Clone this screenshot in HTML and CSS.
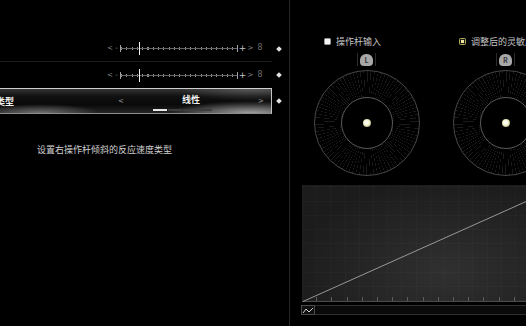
FILE: index.html
```html
<!DOCTYPE html>
<html lang="zh-CN">
<head>
  <meta charset="UTF-8" />
  <title>操作杆设置</title>
  <link rel="stylesheet" href="styles.css">
</head>
<body>
  <div class="screen">
    <div class="left">
      <div class="row sep">
        <div class="row-main slider">
          <span class="arr">&lt;</span><span class="minus">-</span>
          <div class="track"><span class="thumb"></span></div>
          <span class="plus">+</span><span class="arr">&gt;</span><span class="num">8</span>
        </div>
        <div class="mark"><span class="diamond"></span></div>
      </div>
      <div class="row">
        <div class="row-main slider">
          <span class="arr">&lt;</span><span class="minus">-</span>
          <div class="track"><span class="thumb"></span></div>
          <span class="plus">+</span><span class="arr">&gt;</span><span class="num">8</span>
        </div>
        <div class="mark"><span class="diamond"></span></div>
      </div>
      <div class="row">
        <div class="row-main selected">
          <div class="sel-label">类型</div>
          <span class="sel-arrow">&lt;</span>
          <div class="sel-value">
            <span>线性</span>
            <div class="pager"><i class="on"></i><i></i><i></i><i></i></div>
          </div>
          <span class="sel-arrow">&gt;</span>
        </div>
        <div class="mark"><span class="diamond"></span></div>
      </div>
      <p class="desc">设置右操作杆倾斜的反应速度类型</p>
    </div>

    <div class="right">
      <div class="modes">
        <label class="mode first"><span class="box box-white"></span>操作杆输入</label>
        <label class="mode"><span class="box box-olive"><span></span></span>调整后的灵敏度</label>
      </div>

      <div class="sticks">
        <div class="stick">
          <div class="stick-frame"><span class="stick-cap">L</span></div>
          <div class="dial"><div class="dial-inner"><span class="dial-dot"></span></div></div>
        </div>
        <div class="stick">
          <div class="stick-frame"><span class="stick-cap">R</span></div>
          <div class="dial"><div class="dial-inner"><span class="dial-dot"></span></div></div>
        </div>
      </div>

      <div class="graph">
        <div class="graph-body">
          <div class="axis"><i></i><i></i><i></i></div>
          <div class="plot">
            <svg width="261" height="117" viewBox="0 0 261 117">
              <line x1="1" y1="116.5" x2="261" y2="0" stroke="#c8c8c8" stroke-width="0.7" />
            </svg>
          </div>
        </div>
        <div class="graph-foot">
          <span class="foot-icon">
            <svg width="12" height="7" viewBox="0 0 12 7">
              <path d="M1 6 L4 2 L7 5 L11 1" fill="none" stroke="#d0d0d0" stroke-width="1" />
            </svg>
          </span>
          <span class="foot-bar"></span>
        </div>
      </div>
    </div>
  </div>
</body>
</html>
```

FILE: styles.css
```css
body {
  margin: 0;
  background: #000;
  color: #ddd;
  font-family: "Noto Sans CJK SC", "Noto Sans", sans-serif;
  overflow: hidden;
}
.screen {
  display: flex;
  width: 526px;
  height: 326px;
  overflow: hidden;
}

/* left column */
.left {
  width: 289px;
  flex-shrink: 0;
  border-right: 1px solid #262626;
  padding-top: 35px;
}
.row {
  display: flex;
  align-items: center;
}
.row-main {
  width: 272px;
  height: 26px;
  display: flex;
  align-items: center;
  box-sizing: border-box;
}
.row.sep .row-main {
  height: 27px;
  border-bottom: 1px solid #1c1c1c;
}
.mark {
  width: 14px;
  display: flex;
  justify-content: center;
}
.diamond {
  width: 4px;
  height: 4px;
  background: #e2e2e2;
  transform: rotate(45deg);
}

.slider {
  padding-left: 107px;
  font-family: "DejaVu Sans", sans-serif;
  font-size: 7px;
  color: #8a8a8a;
  line-height: 10px;
}
.slider .arr {
  width: 6px;
  text-align: center;
}
.slider .minus {
  width: 7px;
  text-align: center;
}
.slider .plus {
  width: 9px;
  text-align: center;
  font-size: 9px;
  color: #c4c4c4;
}
.slider .plus + .arr {
  width: 7px;
}
.slider .num {
  width: 12px;
  text-align: center;
  font-size: 8px;
  color: #6a6a6a;
}
.track {
  position: relative;
  width: 118px;
  height: 7px;
  box-sizing: border-box;
  border-left: 1px solid #a0a0a0;
  border-right: 1px solid #a0a0a0;
  background:
    linear-gradient(#666, #666) 0 50% / 100% 1px no-repeat,
    repeating-linear-gradient(90deg, #999 0 1px, transparent 1px 5.3px) 0 50% / 100% 3px no-repeat;
}
.thumb {
  position: absolute;
  left: 18px;
  top: -3px;
  width: 1px;
  height: 13px;
  background: #f0f0f0;
}

.selected {
  height: 26px;
  border: 1px solid #8c8c8c;
  border-left: 0;
  border-top-color: #cfcfcf;
  border-right-color: #c4c4c4;
  background:
    radial-gradient(60px 9px at 40px 100%, rgba(190, 190, 190, 0.5), transparent),
    radial-gradient(80px 12px at 250px 100%, rgba(225, 225, 225, 0.65), transparent),
    radial-gradient(70px 12px at 250px 0, rgba(160, 160, 160, 0.35), transparent),
    linear-gradient(#343434, #111 30%, #090909 65%, #242424);
  padding-right: 6px;
  color: #f2f2f2;
  font-size: 9px;
}
.sel-label {
  width: 117px;
  text-indent: -4px;
  white-space: nowrap;
  font-weight: bold;
}
.sel-arrow {
  width: 8px;
  text-align: center;
  color: #a0a0a0;
  font-family: "DejaVu Sans", sans-serif;
  font-size: 7px;
  line-height: 12px;
}
.sel-value {
  flex: 1;
  display: flex;
  flex-direction: column;
  align-items: center;
  padding-top: 2px;
  line-height: 12px;
  font-weight: bold;
}
.pager {
  align-self: flex-start;
  margin: 3px 0 0 28px;
  display: flex;
}
.pager i {
  width: 14px;
  height: 2px;
  background: #3c3c3c;
  margin-right: 1px;
}
.pager i.on {
  background: #e8e8e8;
}

.desc {
  margin: 30px 0 0 37px;
  font-size: 9px;
  line-height: 12px;
  color: #d0d0d0;
}

/* right column */
.right {
  flex: 1;
  min-width: 0;
  overflow: hidden;
  padding-top: 35px;
}
.modes {
  display: flex;
  height: 12px;
  align-items: center;
  padding-left: 34px;
  font-size: 9px;
  color: #c4c4c4;
  white-space: nowrap;
}
.mode {
  display: flex;
  align-items: center;
  gap: 5px;
}
.mode.first {
  width: 135px;
  flex-shrink: 0;
}
.box {
  width: 7px;
  height: 7px;
  box-sizing: border-box;
  border-radius: 1.5px;
}
.box-white {
  background: #f4f4f4;
  border: 1px solid #999;
}
.box-olive {
  border: 1px solid #b3ad5c;
  background: #1a1a10;
  display: grid;
  place-items: center;
}
.box-olive span {
  width: 3px;
  height: 3px;
  background: #ebe8a4;
}

.sticks {
  display: flex;
  padding-left: 7px;
}
.stick {
  width: 139px;
  flex-shrink: 0;
  display: flex;
  flex-direction: column;
  align-items: center;
}
.stick-frame {
  margin-top: 6px;
  height: 13px;
  padding: 0 2px;
  border-left: 1px solid #2c2c2c;
  border-right: 1px solid #2c2c2c;
  display: flex;
  align-items: center;
}
.stick-cap {
  width: 13px;
  height: 12px;
  border-radius: 6px 6px 4px 4px;
  background: #a8a8a8;
  color: #3a3a3a;
  font-size: 7px;
  font-weight: bold;
  line-height: 12px;
  text-align: center;
}
.dial {
  margin-top: 4px;
  width: 104px;
  height: 104px;
  border: 1px solid #474747;
  border-radius: 50%;
  display: grid;
  place-items: center;
  background: repeating-conic-gradient(#1a1a1a 0 0.7deg, transparent 0.7deg 4deg);
}
.dial-inner {
  width: 50px;
  height: 50px;
  border: 1px solid #5a5a5a;
  border-radius: 50%;
  background: #000;
  display: grid;
  place-items: center;
}
.dial-dot {
  width: 8px;
  height: 8px;
  border-radius: 50%;
  background: radial-gradient(circle at 45% 45%, #fffff0 0 30%, #dedcaa 55%, #9a9868 80%, #5a5a40);
}

.graph {
  margin: 9px 0 0 11px;
}
.graph-body {
  display: flex;
  height: 117px;
}
.axis {
  width: 3px;
  margin-right: 1px;
  display: flex;
  flex-direction: column;
  gap: 3px;
}
.axis i {
  flex: 1;
  background: #585858;
}
.plot {
  width: 261px;
  flex-shrink: 0;
  box-sizing: border-box;
  border-bottom: 1px solid #4a4a4a;
  background:
    repeating-linear-gradient(90deg, transparent 0 14.2px, #5c5c5c 14.2px 15.2px) 0 100% / 100% 4px no-repeat,
    repeating-linear-gradient(90deg, rgba(255, 255, 255, 0.02) 0 1px, transparent 1px 14.2px),
    repeating-linear-gradient(0deg, rgba(255, 255, 255, 0.02) 0 1px, transparent 1px 14.2px),
    radial-gradient(ellipse at 55% 75%, #303030, #1c1c1c 75%);
}
.plot svg {
  display: block;
}
.graph-foot {
  margin-top: 3px;
  display: flex;
  height: 10px;
}
.foot-icon {
  width: 19px;
  box-sizing: border-box;
  border: 1px solid #4a4a4a;
  background: #101010;
  display: grid;
  place-items: center;
}
.foot-icon svg {
  display: block;
}
.foot-bar {
  width: 260px;
  flex-shrink: 0;
  box-sizing: border-box;
  border: 1px solid #2e2e2e;
  border-left: 0;
  background: #0a0a0a;
}
```
